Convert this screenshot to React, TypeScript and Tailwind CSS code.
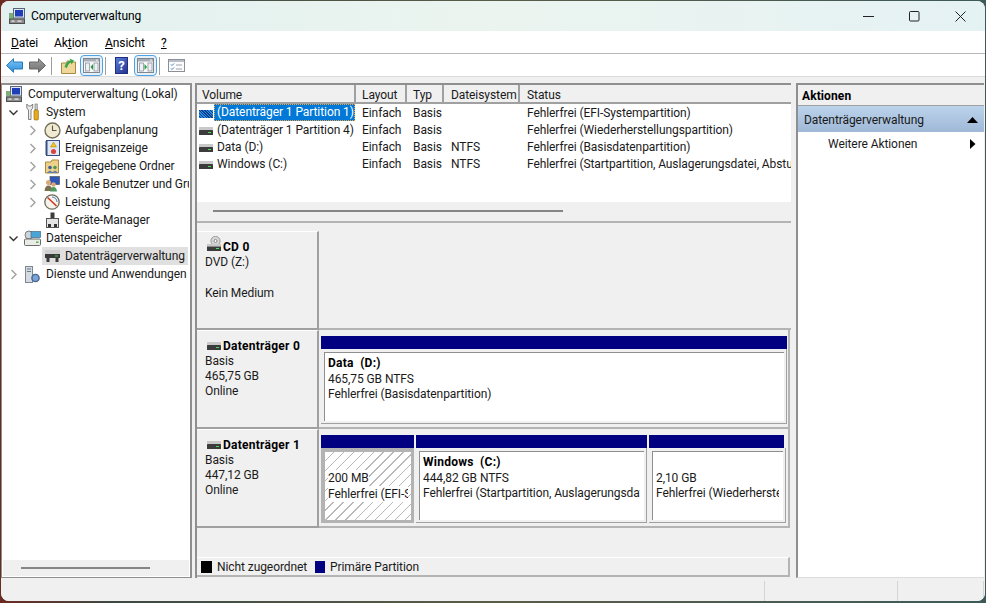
import React from "react";

const Chevron = ({ open }: { open?: boolean }) => (
  <svg width="11" height="11" viewBox="0 0 11 11" className="shrink-0">
    {open ? (
      <path d="M1.5 3.5 L5.5 7.5 L9.5 3.5" fill="none" stroke="#333" strokeWidth="1.4" />
    ) : (
      <path d="M3.5 1 L8 5.5 L3.5 10" fill="none" stroke="#a0a0a0" strokeWidth="1.4" />
    )}
  </svg>
);

const HddIcon = () => (
  <svg width="14" height="8" viewBox="0 0 14 8" className="shrink-0">
    <rect x="0" y="0" width="14" height="3" fill="#c9c9c9" />
    <rect x="0" y="3" width="14" height="5" rx="0.5" fill="#3c3c3c" />
    <rect x="9" y="5" width="3" height="1" fill="#4ade50" />
  </svg>
);

const CdIcon = () => (
  <svg width="14" height="15" viewBox="0 0 14 15" className="shrink-0">
    <circle cx="8.5" cy="5" r="4.6" fill="#d6d6d6" stroke="#9a9a9a" />
    <circle cx="8.5" cy="5" r="1.5" fill="#fff" stroke="#8a8a8a" />
    <rect x="0" y="8" width="14" height="2.5" fill="#c9c9c9" />
    <rect x="0" y="10.5" width="14" height="4.5" fill="#3c3c3c" />
    <rect x="9" y="12" width="3" height="1" fill="#4ade50" />
  </svg>
);

const CompIcon = () => (
  <svg width="16" height="16" viewBox="0 0 16 16" className="shrink-0">
    <rect x="4.5" y="0.5" width="11" height="9.5" fill="#dfe6f2" stroke="#5a6478" />
    <rect x="6" y="2" width="8" height="6.5" fill="#1f3fb8" />
    <rect x="0.5" y="5.5" width="4" height="5" fill="#7cb074" stroke="#5f7f5a" strokeWidth="0.5" />
    <rect x="0.5" y="11" width="15" height="4.5" fill="#8c8c8c" stroke="#4f4f4f" />
    <rect x="2.5" y="12.5" width="3" height="1.2" fill="#eee" />
    <rect x="8.5" y="12.5" width="4" height="1.2" fill="#eee" />
  </svg>
);

const BlueWindow = ({ dir }: { dir: "l" | "r" }) => (
  <div className="w-[23px] h-[21px] shrink-0 rounded-[4px] border-[1.5px] border-[#4ea3e6] bg-[#e4f0fa] flex items-center justify-center">
    <svg width="17" height="15" viewBox="0 0 17 15">
      <rect x="0.5" y="0.5" width="16" height="14" fill="#f7f7f7" stroke="#80868f" />
      <rect x="1" y="1" width="15" height="2.5" fill="#a7adb6" />
      <rect x="13" y="1.5" width="2" height="1.2" fill="#e8e8e8" />
      <rect x="2.5" y="5" width="4" height="8" fill="#eef1f5" stroke="#8e959f" strokeWidth="0.8" />
      <rect x="11" y="5" width="4" height="8" fill="#eef1f5" stroke="#8e959f" strokeWidth="0.8" />
      {dir === "l" ? (
        <path d="M10 6 L7.5 9 L10 12Z" fill="#1f9a3c" />
      ) : (
        <path d="M7.5 6 L10 9 L7.5 12Z" fill="#1f9a3c" />
      )}
    </svg>
  </div>
);

const Arrow = ({ dir, id, from, to, stroke }: { dir: "l" | "r"; id: string; from: string; to: string; stroke: string }) => (
  <svg width="17" height="15" viewBox="0 0 17 15" className="shrink-0">
    <defs>
      <linearGradient id={id} x1="0" y1="0" x2="0" y2="1">
        <stop offset="0" stopColor={from} />
        <stop offset="1" stopColor={to} />
      </linearGradient>
    </defs>
    <path
      d={dir === "l" ? "M0.5 7.5 L7.5 0.7 V4 H16.5 V11 H7.5 V14.3Z" : "M16.5 7.5 L9.5 0.7 V4 H0.5 V11 H9.5 V14.3Z"}
      fill={`url(#${id})`}
      stroke={stroke}
    />
  </svg>
);

const Sep = ({ c }: { c: string }) => <div className={`w-px h-[18px] bg-[#9d9d9d] shrink-0 ${c}`} />;

const TreeIcon = ({ kind }: { kind: string }) => {
  switch (kind) {
    case "tools":
      return (
        <svg width="13" height="18" viewBox="0 0 13 18">
          <path d="M0.8 1 V5 L2.5 7 V16.5 H5 V7 L6.7 5 V1 L5 3 H2.5Z" fill="#ececec" stroke="#666" strokeWidth="0.8" />
          <rect x="9" y="1" width="2.2" height="6" fill="#d0d0d0" stroke="#666" strokeWidth="0.6" />
          <rect x="8" y="7" width="4.4" height="10" rx="1" fill="#e8a91c" stroke="#8a6410" strokeWidth="0.6" />
        </svg>
      );
    case "clock":
      return (
        <svg width="17" height="17" viewBox="0 0 17 17">
          <circle cx="8.5" cy="8.5" r="7.5" fill="#f1ead0" stroke="#75705c" strokeWidth="1.4" />
          <path d="M8.5 3.5 V8.5 H12.5" fill="none" stroke="#555" strokeWidth="1.1" />
        </svg>
      );
    case "log":
      return (
        <svg width="15" height="16" viewBox="0 0 15 16">
          <rect x="1.5" y="0.5" width="13" height="15" fill="#dfe6f4" stroke="#38507f" />
          <rect x="0.5" y="1" width="2" height="14" fill="#38507f" />
          <path d="M8.5 2 L11.5 7 H5.5Z" fill="#f5c518" stroke="#9a7a10" strokeWidth="0.5" />
          <circle cx="8.5" cy="11.5" r="2.5" fill="#d8443a" />
        </svg>
      );
    case "share":
      return (
        <svg width="15" height="15" viewBox="0 0 15 15">
          <path d="M0.5 3 H6 L7 1 H13.5 V14 H0.5Z" fill="#eed28a" stroke="#a98a3f" />
          <circle cx="5" cy="8.5" r="1.8" fill="#3d5f95" />
          <circle cx="10" cy="8.5" r="1.8" fill="#4a9a55" />
          <path d="M2.5 14 Q5 10 7.5 14 M7.5 14 Q10 10 12.5 14" fill="#6a87b8" stroke="#3d5f95" strokeWidth="0.5" />
        </svg>
      );
    case "users":
      return (
        <svg width="16" height="16" viewBox="0 0 16 16">
          <rect x="6" y="0.5" width="9.5" height="8" fill="#2f57b8" stroke="#555" strokeWidth="0.7" />
          <circle cx="4.5" cy="6.5" r="2.5" fill="#d9a979" />
          <path d="M0.5 15 Q1 9.5 4.5 9.5 Q8 9.5 8.5 15Z" fill="#7d6f4d" />
          <circle cx="9.5" cy="8.5" r="2.3" fill="#d9a979" />
          <path d="M6 15.5 Q6.5 11 9.5 11 Q12.5 11 13 15.5Z" fill="#4d9a5d" />
        </svg>
      );
    case "perf":
      return (
        <svg width="16" height="16" viewBox="0 0 16 16">
          <circle cx="8" cy="8" r="7.2" fill="#f6f4ea" stroke="#6c6a5d" strokeWidth="1.3" />
          <path d="M3.5 3.5 L12.5 12" stroke="#d0301f" strokeWidth="1.5" />
          <path d="M8 3 A5 5 0 0 1 13 8" fill="none" stroke="#4a78c0" strokeWidth="1" />
        </svg>
      );
    case "dev":
      return (
        <svg width="13" height="16" viewBox="0 0 13 16">
          <rect x="4.5" y="0.5" width="4" height="6" fill="#3d3d3d" />
          <rect x="0.5" y="6.5" width="12" height="9" fill="#e4e4e4" stroke="#555" />
          <rect x="2" y="12" width="3" height="3" fill="#333" />
          <rect x="8" y="12" width="3" height="3" fill="#333" />
        </svg>
      );
    case "storage":
      return (
        <svg width="17" height="16" viewBox="0 0 17 16">
          <circle cx="5" cy="5" r="4" fill="#cfd4d8" stroke="#7d7d7d" />
          <rect x="7" y="1.5" width="9.5" height="6" fill="#48a5d6" stroke="#476b86" strokeWidth="0.7" />
          <rect x="0.5" y="9" width="16" height="6.5" rx="1" fill="#e8ebe6" stroke="#6b6b6b" />
          <rect x="12" y="11.5" width="2.5" height="1.5" fill="#59b44e" />
        </svg>
      );
    case "disk":
      return (
        <svg width="15" height="12" viewBox="0 0 15 12">
          <rect x="0" y="0" width="15" height="4" fill="#d0d0d0" />
          <rect x="0" y="4" width="15" height="4" fill="#3a3a3a" />
          <rect x="1.5" y="8" width="3" height="4" fill="#3a3a3a" />
          <rect x="10.5" y="8" width="3" height="4" fill="#3a3a3a" />
          <rect x="10" y="5.5" width="3" height="1" fill="#45d045" />
        </svg>
      );
    default:
      return (
        <svg width="15" height="17" viewBox="0 0 15 17">
          <rect x="0.5" y="0.5" width="7" height="16" fill="#d5dbe2" stroke="#7c8792" />
          <rect x="2" y="2.5" width="4" height="1" fill="#6a7785" />
          <rect x="2" y="5" width="4" height="1" fill="#6a7785" />
          <circle cx="10.5" cy="12" r="3.6" fill="#7ba3d6" stroke="#44648f" strokeWidth="1.4" />
        </svg>
      );
  }
};

const rows = [
  { level: 1, chev: "open", icon: "tools", label: "System" },
  { level: 2, chev: "closed", icon: "clock", label: "Aufgabenplanung" },
  { level: 2, chev: "closed", icon: "log", label: "Ereignisanzeige" },
  { level: 2, chev: "closed", icon: "share", label: "Freigegebene Ordner" },
  { level: 2, chev: "closed", icon: "users", label: "Lokale Benutzer und Gruppen" },
  { level: 2, chev: "closed", icon: "perf", label: "Leistung" },
  { level: 2, icon: "dev", label: "Geräte-Manager" },
  { level: 1, chev: "open", icon: "storage", label: "Datenspeicher" },
  { level: 2, icon: "disk", label: "Datenträgerverwaltung", selected: true },
  { level: 1, chev: "closed", icon: "services", label: "Dienste und Anwendungen" },
];

const Tree = () => (
  <div className="flex flex-col mr-px overflow-hidden">
    <div className="flex items-center h-[18px] whitespace-nowrap pl-[4px]">
      <CompIcon />
      <span className="pl-[6px]">Computerverwaltung (Lokal)</span>
    </div>
    {rows.map((r) => (
      <div key={r.label} className="flex items-center h-[18px] whitespace-nowrap">
        <span className={r.level === 1 ? "w-[3px] shrink-0" : "w-[22px] shrink-0"} />
        <span
          className={
            r.level === 1
              ? "w-[16px] h-full flex items-center justify-center shrink-0 mr-[1px]"
              : "w-[16px] h-full flex items-center justify-center shrink-0 mr-[2px]"
          }
        >
          {r.chev ? <Chevron open={r.chev === "open"} /> : null}
        </span>
        <span className={r.selected ? "flex items-center flex-1 h-full bg-[#e0e0e0] mr-[1px]" : "flex items-center"}>
          <span className="w-[20px] flex justify-center shrink-0">
            <TreeIcon kind={r.icon} />
          </span>
          <span className={r.level === 1 ? "pl-[4px]" : "pl-[3px]"}>{r.label}</span>
        </span>
      </div>
    ))}
  </div>
);

const cols = [
  { label: "Volume", c: "w-[159px] pl-[5px] border-r-2" },
  { label: "Layout", c: "w-[51px] pl-[6px] border-r-2" },
  { label: "Typ", c: "w-[37px] pl-[6px] border-r-2" },
  { label: "Dateisystem", c: "w-[76px] pl-[7px] border-r-2" },
  { label: "Status", c: "flex-1 pl-[7px]" },
];

const vols = [
  { n: "(Datenträger 1 Partition 1)", fs: "", s: "Fehlerfrei (EFI-Systempartition)", sel: true },
  { n: "(Datenträger 1 Partition 4)", fs: "", s: "Fehlerfrei (Wiederherstellungspartition)" },
  { n: "Data (D:)", fs: "NTFS", s: "Fehlerfrei (Basisdatenpartition)" },
  { n: "Windows (C:)", fs: "NTFS", s: "Fehlerfrei (Startpartition, Auslagerungsdatei, Absturzabbild, Primäre Partition)" },
];

const VolumeList = () => (
  <div className="h-[141px] shrink-0 border-t-2 border-l-2 border-[#8f8f8f] bg-white flex flex-col overflow-hidden">
    <div className="flex h-[19px] bg-[#f0f0f0] shrink-0">
      {cols.map((c) => (
        <div key={c.label} className={`${c.c} border-b-2 border-[#a0a0a0] leading-[19px] pt-px shrink-0 whitespace-nowrap`}>
          {c.label}
        </div>
      ))}
    </div>
    <div className="h-[98px] shrink-0 flex flex-col overflow-hidden pt-[1px]">
      {vols.map((v) => (
        <div key={v.n} className="flex h-[17px] leading-[17px] whitespace-nowrap shrink-0">
          <div className="w-[159px] flex items-center shrink-0 pl-[2px]">
            <span className={v.sel ? "w-[15px] shrink-0 flex" : "w-[15px] mr-[3px] shrink-0 flex"}>
              {v.sel ? (
                <span className="w-[14px] h-[8px] bg-[repeating-linear-gradient(45deg,#2b8ce6_0_1px,#0a3f8a_1px_2px)]" />
              ) : (
                <HddIcon />
              )}
            </span>
            {v.sel ? (
              <span className="self-start -mt-px bg-[#0078d7] text-white border border-dotted border-[#f2a33a] h-[17px] leading-[15px] pl-[2px] w-[141px] shrink-0">
                {v.n}
              </span>
            ) : (
              <span>{v.n}</span>
            )}
          </div>
          <div className="w-[51px] pl-[6px] shrink-0">Einfach</div>
          <div className="w-[37px] pl-[6px] shrink-0">Basis</div>
          <div className="w-[76px] pl-[7px] shrink-0">{v.fs}</div>
          <div className="pl-[7px] flex-1 overflow-hidden">{v.s}</div>
        </div>
      ))}
    </div>
    <div className="h-[18px] bg-[#f0f0f0] flex items-center shrink-0 pl-[16px]">
      <div className="w-[350px] h-[2px] bg-[#858585]" />
    </div>
    <div className="h-[3px] bg-[#f0f0f0] border-b-2 border-[#b4b4b4] shrink-0" />
    <div className="flex-1 bg-[#f0f0f0]" />
  </div>
);

const DiskLabel = ({ children, icon, title }: { children: React.ReactNode; icon: React.ReactNode; title: string }) => (
  <div className="w-[122px] h-[99px] shrink-0 border-r-2 border-b-2 border-t border-t-white border-[#a0a0a0] pl-[8px] pt-[7px] leading-[15px]">
    <div className="flex items-end h-[16px] font-bold text-black tracking-[0.25px]">
      <span className="ml-[2px] mr-[2px] mb-[4px] shrink-0">{icon}</span>
      {title}
    </div>
    {children}
  </div>
);

const Partition = ({
  title,
  lines,
  w,
  hatched,
  bar,
}: {
  title?: string;
  lines: string[];
  w: string;
  hatched?: boolean;
  bar?: string;
}) => (
  <div className={`${w} flex flex-col shrink-0 min-w-0`}>
    <div className={`h-[13px] bg-[#000080] shrink-0 ${bar ?? ""}`} />
    {hatched ? (
      <div className="flex-1 bg-[#b3b3b3] pt-[4px] pl-[4px] pr-[3px] pb-[3px] min-h-0">
        <div className="h-full bg-[repeating-linear-gradient(135deg,#ffffff_0_6px,#b8b8b8_6px_7px)] pt-[18px] pl-[3px] leading-[16px] whitespace-nowrap overflow-hidden">
          {lines.map((l) => (
            <div key={l} className="w-fit max-w-[80px] overflow-hidden bg-white">
              {l}
            </div>
          ))}
        </div>
      </div>
    ) : (
      <div className="flex-1 border-r border-b border-[#a0a0a0] bg-[#f0f0f0] pl-[3px] pr-[2px] pt-[3px] pb-[2px] min-h-0">
        <div className="h-full bg-white border-t border-l border-[#8f8f8f] pl-[3px] pr-[4px] pt-[3px] leading-[15.5px] whitespace-nowrap overflow-hidden">
          <div className="font-bold h-[15.5px] text-black overflow-hidden whitespace-pre tracking-[0.25px]">{title ?? "\u00a0"}</div>
          {lines.map((l) => (
            <div key={l} className="overflow-hidden">
              {l}
            </div>
          ))}
        </div>
      </div>
    )}
  </div>
);

const DiskArea = () => (
  <div className="flex-1 flex flex-col min-h-0 bg-[#f0f0f0] border-l-2 border-[#8f8f8f] overflow-hidden">
    <div className="h-[7px] shrink-0" />
    <div className="flex h-[99px] shrink-0">
      <DiskLabel icon={<CdIcon />} title="CD 0">
        <div>DVD (Z:)</div>
        <div className="mt-[16px]">Kein Medium</div>
      </DiskLabel>
      <div className="flex-1 border-b-2 border-[#b4b4b4]" />
    </div>
    <div className="flex h-[99px] shrink-0">
      <DiskLabel icon={<HddIcon />} title="Datenträger 0">
        <div>Basis</div>
        <div>465,75 GB</div>
        <div>Online</div>
      </DiskLabel>
      <div className="w-[471px] shrink-0 flex pl-[2px] pt-[6px] pb-[3px] border-r-2 border-b-2 border-[#b4b4b4]">
        <Partition title="Data  (D:)" lines={["465,75 GB NTFS", "Fehlerfrei (Basisdatenpartition)"]} w="w-[466px]" />
      </div>
    </div>
    <div className="flex h-[99px] shrink-0">
      <DiskLabel icon={<HddIcon />} title="Datenträger 1">
        <div>Basis</div>
        <div>447,12 GB</div>
        <div>Online</div>
      </DiskLabel>
      <div className="w-[471px] shrink-0 flex gap-[2px] pl-[2px] pt-[6px] pb-[3px] border-r-2 border-b-2 border-[#b4b4b4]">
        <Partition hatched lines={["200 MB", "Fehlerfrei (EFI-Systempartition)"]} w="w-[93px]" />
        <Partition title="Windows  (C:)" lines={["444,82 GB NTFS", "Fehlerfrei (Startpartition, Auslagerungsdatei, Absturzabbild)"]} w="w-[231px]" />
        <Partition lines={["2,10 GB", "Fehlerfrei (Wiederherstellungspartition)"]} w="w-[137px]" bar="mr-[2px]" />
      </div>
    </div>
    <div className="flex-1" />
    <div className="h-[20px] shrink-0 w-[593px] border-t border-t-white border-r-2 border-b-2 border-r-[#b4b4b4] border-b-[#b4b4b4] flex items-center pl-[4px] pt-px leading-[15px] whitespace-nowrap">
      <span className="w-[11px] h-[12px] bg-black mr-[5px] shrink-0" />
      <span className="w-[93px] mr-[5px] shrink-0">Nicht zugeordnet</span>
      <span className="w-[10px] h-[12px] bg-[#000080] mr-[5px] shrink-0" />
      <span>Primäre Partition</span>
    </div>
    <div className="h-px shrink-0" />
  </div>
);

export default function App() {
  return (
    <div className="w-[986px] h-[603px] pl-px pt-px bg-[linear-gradient(90deg,#6b2a22,#3c4a42_12%,#5a5c48_50%,#3d5a58)] overflow-hidden text-[12px] tracking-[-0.08px] text-[#1a1a1a] font-['Roboto',sans-serif]">
      <div className="w-[984px] h-[600px] flex flex-col rounded-[8px] overflow-hidden bg-[#f0f0f0]">
        {/* Title bar */}
        <div className="h-[30px] shrink-0 flex items-center bg-[linear-gradient(90deg,#e2f1f0,#ebf4ef_50%,#e5f2f4)]">
          <span className="ml-[8px] mr-[6px] flex">
            <CompIcon />
          </span>
          <span className="text-black">Computerverwaltung</span>
          <div className="ml-auto flex items-center h-full">
            <button className="w-[46px] h-full flex items-center justify-center">
              <svg width="11" height="11" viewBox="0 0 11 11">
                <path d="M0 5.5 H11" stroke="#222" strokeWidth="1" />
              </svg>
            </button>
            <button className="w-[46px] h-full flex items-center justify-center">
              <svg width="11" height="11" viewBox="0 0 11 11">
                <rect x="0.5" y="0.5" width="9.5" height="9.5" rx="1" fill="none" stroke="#222" />
              </svg>
            </button>
            <button className="w-[46px] h-full flex items-center justify-center mr-[2px]">
              <svg width="11" height="11" viewBox="0 0 11 11">
                <path d="M0.5 0.5 L10.5 10.5 M10.5 0.5 L0.5 10.5" stroke="#222" strokeWidth="1" />
              </svg>
            </button>
          </div>
        </div>
        {/* Menu */}
        <div className="h-[23px] shrink-0 bg-white border-b border-[#b8b8bc] flex items-center pl-[10px] pt-[1px] text-black">
          <span className="w-[43px]">
            <span className="underline">D</span>atei
          </span>
          <span className="w-[51px]">
            Ak<span className="underline">t</span>ion
          </span>
          <span className="w-[56px]">
            <span className="underline">A</span>nsicht
          </span>
          <span className="underline">?</span>
        </div>
        {/* Toolbar */}
        <div className="h-[22px] shrink-0 bg-white flex items-center pl-[5px] pt-px">
          <Arrow dir="l" id="al" from="#7cc6f7" to="#2f8fdb" stroke="#2a78b8" />
          <span className="ml-[6px] flex">
            <Arrow dir="r" id="ar" from="#a0a0a0" to="#707070" stroke="#666" />
          </span>
          <Sep c="ml-[5px]" />
          <svg width="15" height="16" viewBox="0 0 15 16" className="ml-[9px] shrink-0">
            <path d="M0.5 5 H6 V3 H9 V4 H14.5 V15.5 H0.5Z" fill="#efd79a" stroke="#a68a44" />
            <path d="M3.5 9 Q5 3.5 9.5 2.5 L8.5 0.5 L13 2.5 L10.5 6.5 L10 4.5 Q7 5.5 6 10Z" fill="#37a64a" />
          </svg>
          <span className="ml-[4px] flex">
            <BlueWindow dir="l" />
          </span>
          <Sep c="ml-[2px]" />
          <div className="w-[13px] h-[17px] ml-[9px] shrink-0 bg-[linear-gradient(135deg,#5a7cd8,#24358f)] border border-[#1f2f80] text-white font-bold text-[13px] leading-[15px] text-center">
            ?
          </div>
          <span className="ml-[6px] flex">
            <BlueWindow dir="r" />
          </span>
          <Sep c="ml-[2px]" />
          <svg width="17" height="13" viewBox="0 0 17 13" className="ml-[8px] shrink-0">
            <rect x="0.5" y="0.5" width="16" height="12" fill="#fbfbfb" stroke="#8a8f98" />
            <rect x="1" y="1" width="15" height="2" fill="#b8bdc6" />
            <path d="M3 5.5 L4 6.5 L6 4.5 M3 9.5 L4 10.5 L6 8.5" fill="none" stroke="#3b7fd1" />
            <path d="M8 6 H14 M8 10 H14" stroke="#9aa0a8" />
          </svg>
        </div>
        {/* Main */}
        <div className="flex-1 min-h-0 flex border-t border-[#dcdcdc] pt-[6px] bg-[#f0f0f0]">
          <div className="w-[191px] shrink-0 flex flex-col border-t-2 border-l border-r-2 border-b border-[#8f8f8f] bg-white">
            <div className="flex-1 min-h-0 overflow-hidden">
              <Tree />
            </div>
            <div className="h-[16px] shrink-0 bg-[#f0f0f0] flex items-center pl-[18px] ml-px mr-px mb-px">
              <div className="w-[129px] h-[2px] bg-[#858585]" />
            </div>
          </div>
          <div className="w-[596px] ml-[3px] shrink-0 flex flex-col">
            <VolumeList />
            <DiskArea />
          </div>
          <div className="w-[188px] ml-[5px] shrink-0 flex flex-col border-t-2 border-l-2 border-b border-[#8f8f8f] border-b-[#dcdcdc] bg-white">
            <div className="h-[21px] shrink-0 bg-[#f0f0f0] border-b border-[#a0a0a0] font-bold pl-[4px] leading-[22px] tracking-[0.1px] text-black">
              Aktionen
            </div>
            <div className="h-[26px] shrink-0 pt-px bg-[linear-gradient(180deg,#bcd3ec,#9fb8d6)] flex items-center pl-[6px] pr-[6px] justify-between">
              <span>Datenträgerverwaltung</span>
              <svg width="11" height="6" viewBox="0 0 11 6">
                <path d="M5.5 0 L11 6 H0Z" fill="#000" />
              </svg>
            </div>
            <div className="flex items-center justify-between h-[24px] pl-[30px] pr-[8px]">
              <span>Weitere Aktionen</span>
              <svg width="6" height="10" viewBox="0 0 6 10">
                <path d="M0 0 L5.5 5 L0 10Z" fill="#000" />
              </svg>
            </div>
          </div>
        </div>
        {/* Status bar */}
        <div className="h-[23px] shrink-0 bg-[#f0f0f0] flex pt-[3px]">
          <div className="w-[764px] border-r border-[#d4d4d4]" />
          <div className="w-[133px] border-r border-[#d4d4d4]" />
          <div className="w-[86px] border-r border-[#d4d4d4]" />
        </div>
      </div>
    </div>
  );
}
